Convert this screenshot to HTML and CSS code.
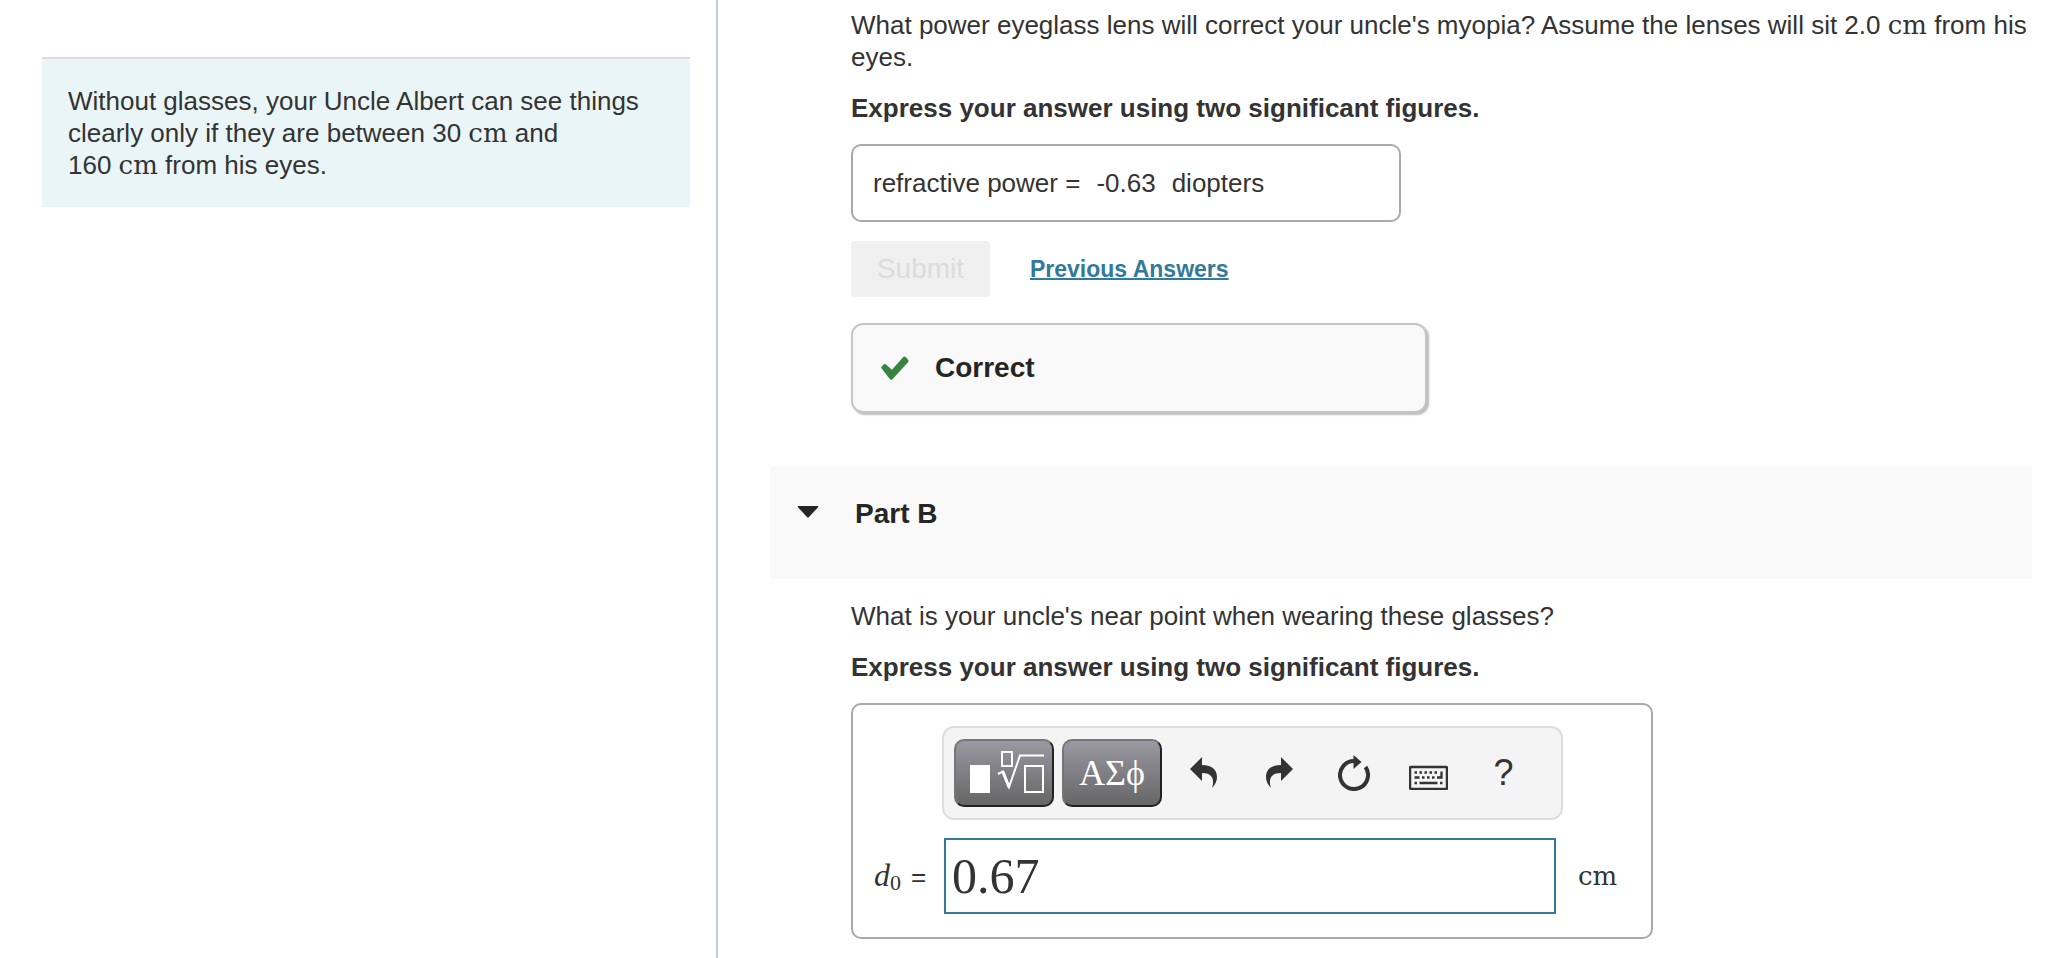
FILE: index.html
```
<!DOCTYPE html>
<html lang="en">
<head>
    <meta charset="UTF-8">
    <title>Uncle Albert's Glasses</title>
    <link rel="stylesheet" href="styles.css">
</head>
<body>
<div class="page">
    <aside class="side">
        <div class="intro">
            <p>Without glasses, your Uncle Albert can see things clearly only if they are between 30&nbsp;<span class="unit">cm</span> and 160&nbsp;<span class="unit">cm</span> from his eyes.</p>
        </div>
    </aside>
    <main class="main">
        <section class="part" id="part-a">
            <p>What power eyeglass lens will correct your uncle's myopia? Assume the lenses will sit 2.0 <span class="unit">cm</span> from his eyes.</p>
            <p class="hint">Express your answer using two significant figures.</p>
            <div class="answer">
                <span>refractive power =</span>
                <span class="value">-0.63</span>
                <span>diopters</span>
            </div>
            <div class="actions">
                <button class="submit" type="button" disabled>Submit</button>
                <a class="previous" href="#">Previous Answers</a>
            </div>
            <div class="feedback">
                <svg class="check" viewBox="0 0 28 24" aria-hidden="true">
                    <path d="M5 8.500q-1.200-1.200-2.400 0L.8 10.400q-1.200 1.200 0 2.400l8.200 10.400q1.200 1.300 2.400 0L27 6.200q1-1.200 0-2.400L24.700 1q-1.200-1.200-2.400 0L11 13.800z" fill="#37833f"/>
                </svg>
                <h3>Correct</h3>
            </div>
        </section>
        <header class="part-head">
            <svg class="arrow" viewBox="0 0 22 12" aria-hidden="true">
                <path d="M1.500 0h19q1.500 0 .5 1.300L12 11q-1 1-2 0L1 1.300Q0 0 1.500 0z" fill="#252525"/>
            </svg>
            <h2>Part B</h2>
        </header>
        <section class="part" id="part-b">
            <p>What is your uncle's near point when wearing these glasses?</p>
            <p class="hint">Express your answer using two significant figures.</p>
            <div class="editor">
                <div class="toolbar">
                    <button class="dark" type="button" aria-label="Templates">
                        <svg width="80" height="46" viewBox="0 0 80 46">
                            <rect x="6" y="15" width="20" height="28" fill="#fff"/>
                            <g fill="none" stroke="#fff" stroke-width="2">
                                <rect x="38" y="2" width="10" height="14"/>
                                <rect x="61" y="16" width="18" height="26"/>
                                <path d="M34 24l5-2.500L45 37 56 5.500h24"/>
                                <path d="M39 22l6 15" stroke-width="3"/>
                            </g>
                        </svg>
                    </button>
                    <button class="dark greek" type="button">ΑΣϕ</button>
                    <button class="tool" type="button" aria-label="Undo">
                        <svg width="28" height="32" viewBox="0 0 28 32">
                            <path d="M0 12L12 0v8c9 0 15 4 15 12 0 4-2 8-5 11 3-9 0-15-10-15v8z" fill="#333"/>
                        </svg>
                    </button>
                    <button class="tool" type="button" aria-label="Redo">
                        <svg width="28" height="32" viewBox="0 0 28 32">
                            <path d="M28 12L16 0v8C7 8 1 12 1 20c0 4 2 8 5 11-3-9 0-15 10-15v8z" fill="#333"/>
                        </svg>
                    </button>
                    <button class="tool" type="button" aria-label="Reset">
                        <svg width="32" height="36" viewBox="0 0 32 36">
                            <path d="M16 6A14 14 0 1 0 27.500 12" fill="none" stroke="#333" stroke-width="4"/>
                            <path d="M15.500 0l8 7-8 7z" fill="#333"/>
                        </svg>
                    </button>
                    <button class="tool" type="button" aria-label="Keyboard shortcuts">
                        <svg width="39" height="34" viewBox="0 0 39 34">
                            <rect x="1" y="11" width="37" height="22" rx="1" fill="none" stroke="#333" stroke-width="2.500"/>
                            <g stroke="#333" stroke-width="2.300" fill="none">
                                <path d="M5.500 16.500h23" stroke-dasharray="2.500"/>
                                <path d="M5.500 21.500h5M13 21.500h2.500M18 21.500h2.500M23 21.500h2.500M28 21.500h4.500v-6"/>
                                <path d="M5.500 27H8M10.500 27h18M31 27h2.500"/>
                            </g>
                        </svg>
                    </button>
                    <button class="tool help" type="button">?</button>
                </div>
                <label class="name" for="near"><i>d</i><sub>0</sub><span>=</span></label>
                <input class="field" id="near" type="text" value="0.67">
                <span class="unit">cm</span>
            </div>
        </section>
    </main>
</div>
</body>
</html>
```
FILE: styles.css
```
*{
    margin: 0;
    padding: 0;
    box-sizing: border-box;
}
body{
    font-family: "Liberation Sans", Arial, sans-serif;
    font-size: 26px;
    line-height: 32px;
    color: #333;
    background-color: #fff;
}
.page{
    display: flex;
    min-height: 100vh;
}
.side{
    flex: 0 0 718px;
    padding: 57px 26px 0 42px;
    border-right: 2px solid #bfcddc;
}
.intro{
    padding: 26px 38px 26px 26px;
    border-top: 2px solid #ddd;
    background-color: #eaf5f7;
}
.unit{
    font-family: "DejaVu Serif", serif;
    line-height: 1;
}
.main{
    flex: 1;
    min-width: 0;
}
.part{
    padding: 0 40px 0 133px;
}
#part-a{
    padding-top: 9px;
}
.hint{
    margin-top: 19px;
    font-weight: bold;
}
.answer{
    display: flex;
    align-items: center;
    width: 550px;
    height: 78px;
    margin-top: 20px;
    padding-left: 20px;
    border: 2px solid #a9a9a9;
    border-radius: 10px;
}
.value{
    margin: 0 16px;
}
.actions{
    display: flex;
    align-items: center;
    gap: 40px;
    margin-top: 19px;
}
.submit{
    width: 139px;
    height: 56px;
    border: none;
    border-radius: 4px;
    font-family: inherit;
    font-size: 28px;
    color: #dcdcdc;
    background-color: #f0f0f0;
}
.previous{
    font-size: 23px;
    font-weight: bold;
    color: #317a9b;
    text-decoration-thickness: 2px;
}
.feedback{
    display: flex;
    align-items: center;
    gap: 26px;
    width: 576px;
    height: 90px;
    margin-top: 26px;
    padding-left: 28px;
    border: 2px solid #c6c6c6;
    border-radius: 12px;
    background-color: #f9f9f9;
    box-shadow: 2px 2px 2px #bbb;
}
.check{
    width: 28px;
    height: 24px;
}
h2, h3{
    font-size: 28px;
    color: #252525;
}
.part-head{
    display: flex;
    align-items: flex-start;
    gap: 36px;
    height: 113px;
    margin: 53px 38px 21px 52px;
    padding: 32px 27px;
    background-color: #f9f9f9;
}
.arrow{
    width: 22px;
    height: 12px;
    margin-top: 8px;
}
.editor{
    display: grid;
    grid-template-columns: 68px 614px auto;
    row-gap: 18px;
    align-items: center;
    width: 802px;
    margin-top: 20px;
    padding: 21px 20px 23px 21px;
    border: 2px solid #a9a9a9;
    border-radius: 10px;
}
.toolbar{
    grid-column: 2 / 4;
    display: flex;
    align-items: center;
    gap: 8px;
    width: 621px;
    height: 94px;
    padding-left: 10px;
    border: 2px solid #ddd;
    border-radius: 12px;
    background-color: #f4f4f4;
}
.dark{
    width: 100px;
    height: 68px;
    border: 2px solid;
    border-color: #767676 #222 #222 #767676;
    border-radius: 10px;
    color: #fff;
    background: linear-gradient(#9a98a2, #666);
}
.dark svg{
    display: block;
    margin: 0 auto;
}
.greek{
    font-family: "Liberation Serif", "Times New Roman", serif;
    font-size: 36px;
}
.tool{
    display: flex;
    align-items: center;
    justify-content: center;
    width: 67px;
    height: 68px;
    border: none;
    background: none;
}
.help{
    font-family: inherit;
    font-size: 36px;
    color: #333;
}
.name{
    font-family: "Liberation Serif", "Times New Roman", serif;
    font-size: 32px;
}
.name sub{
    font-size: 22px;
    line-height: 0;
    vertical-align: -4px;
}
.name span{
    margin-left: 10px;
    font-family: "Liberation Sans", Arial, sans-serif;
    font-size: 26px;
}
.field{
    height: 76px;
    margin-left: 2px;
    padding: 0 6px;
    border: 2px solid #317a9b;
    font-family: "Liberation Serif", "Times New Roman", serif;
    font-size: 50px;
    color: #333;
    outline: none;
}
.editor > .unit{
    margin-left: 22px;
}
```
